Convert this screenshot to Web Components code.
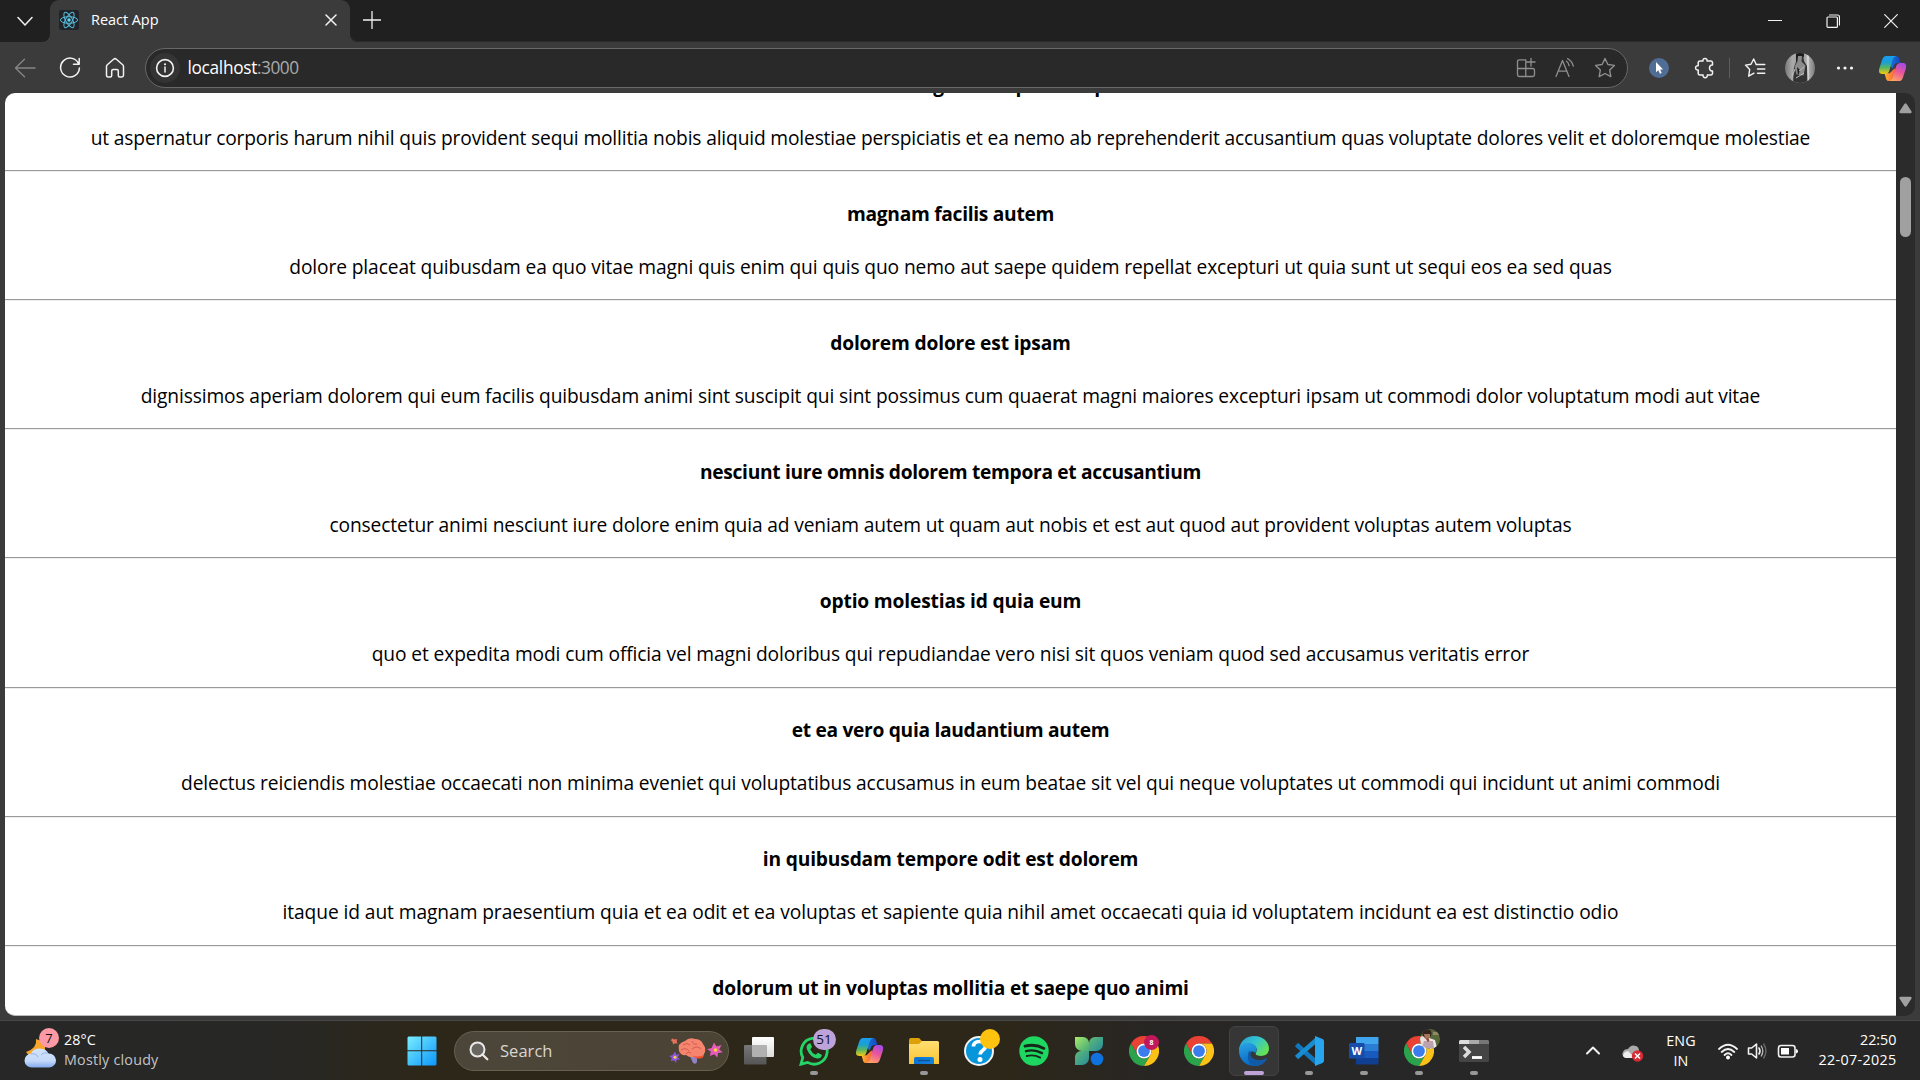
<!DOCTYPE html>
<html lang="en">
<head>
<meta charset="utf-8">
<title>React App</title>
<style>
html,body{margin:0;height:100%;overflow:hidden;background:#3b3b3b;font-family:"Open Sans","Noto Sans",sans-serif}
</style>
</head>
<body>
<desktop-screen></desktop-screen>
<script>
const chromeBall = `<g id="c"><path fill="#e94235" d="M24 12H44.8A24 24 0 0 0 3.2 12L13.6 30A12 12 0 0 1 24 12z"/><path fill="#2ba24c" d="M34.4 30 24 48A24 24 0 0 1 3.2 12L13.6 30A12 12 0 0 0 34.4 30z"/><path fill="#fbc116" d="M24 12H44.8A24 24 0 0 1 24 48L34.4 30A12 12 0 0 0 24 12z"/><circle cx="24" cy="24" r="12" fill="#fff"/><circle cx="24" cy="24" r="9.4" fill="#3b7ded"/></g>`;
const copilot = `<defs><linearGradient id="a" x1="0" y1="0" x2="0" y2="1"><stop offset="0" stop-color="#1a9df0"/><stop offset=".35" stop-color="#199fd6"/><stop offset=".65" stop-color="#58b660"/><stop offset="1" stop-color="#f7cb12"/></linearGradient><linearGradient id="b" x1=".7" y1="0" x2=".3" y2="1"><stop offset="0" stop-color="#a44be8"/><stop offset=".45" stop-color="#e9559b"/><stop offset="1" stop-color="#ffa464"/></linearGradient><linearGradient id="d" x1="0" x2="1"><stop offset="0" stop-color="#1684db"/><stop offset="1" stop-color="#1745c4"/></linearGradient><linearGradient id="e" x1="0" x2="1"><stop offset="0" stop-color="#ffb030"/><stop offset="1" stop-color="#f1453b"/></linearGradient></defs>
<path fill="url(#d)" d="M9 2h9.500q2.500 0 3.200 2.300l1.500 5h-3q-3 0-4 3l-1 3-4-5z"/><path fill="url(#e)" d="M7 20h5l5-5 5 4-2 6q-1 3-4 3h-4.500q-2.300 0-3-2l-1.500-5z"/>
<path fill="url(#a)" d="M8.500 2h10.500q-3 1-3.700 3.500l-3.500 11.500q-1 3.700-4.500 3.700H4.500C1 20.700.5 18 1.500 14.500L4.300 6q1.200-4 4.200-4z"/><path fill="url(#b)" d="M21.500 28H11.500q3-1 3.700-3.500l3.500-11.500q1-3.700 4.500-3.700h2.500c3.500 0 4 2.700 3 6.200L25.900 24q-1.200 4-4.400 4z"/>`;
const I = {
 down:[16,'0 0 16 16',`<path class="s" d="M1 4.500 8 12l7-7.500" stroke-width="1.500"/>`],
 react:[20,'0 0 20 20',`<rect width="20" height="20" rx="2" fill="#20242a"/><g fill="none" stroke="#58bcd8" stroke-width="1"><ellipse cx="10" cy="10" rx="8.600" ry="3.300"/><ellipse cx="10" cy="10" rx="8.600" ry="3.300" transform="rotate(60 10 10)"/><ellipse cx="10" cy="10" rx="8.600" ry="3.300" transform="rotate(120 10 10)"/></g><circle cx="10" cy="10" r="1.700" fill="#61dafb"/>`],
 x:[12,'0 0 12 12',`<path class="s" d="M1 1l10 10M11 1 1 11" stroke-width="1.500"/>`],
 plus:[18,'0 0 18 18',`<path class="s" d="M9 .5v17M.5 9h17" stroke-width="1.300"/>`],
 min:[14,'0 0 14 14',`<path class="s" d="M.5 6.500h13" stroke-width="1.200"/>`],
 max:[14,'0 0 14 14',`<rect class="s" x="1" y="3" width="10.400" height="10.400" rx="1" stroke-width="1.200"/><path class="s" d="M3.500 1h8a2 2 0 0 1 2 2v8" stroke-width="1.200"/>`],
 close:[14,'0 0 14 14',`<path class="s" d="M.7.700l12.600 12.600M13.300.700.7 13.300" stroke-width="1.200"/>`],
 back:[22,'0 0 22 22',`<path class="s" stroke="#858585" d="M21 11H1.500M10.500 2.300 1.500 11l9 8.700" stroke-width="1.400"/>`],
 reload:[22,'0 0 22 22',`<path class="s" d="M19.800 7.200A9.400 9.400 0 1 0 20.400 11M20.200 1.500v5.700h-5.700" stroke-width="1.500"/>`],
 home:[22,'0 0 22 22',`<path class="s" d="M2.500 9.500q0-1 .8-1.700l6.300-5.600q1.400-1.200 2.800 0l6.300 5.600q.8.700.8 1.700v8.800q0 1.700-1.700 1.700h-2q-1.500 0-1.500-1.500V14q0-1.500-1.500-1.500h-3.600Q7.700 12.500 7.700 14v4.500q0 1.500-1.500 1.500h-2q-1.700 0-1.700-1.700z" stroke-width="1.500"/>`],
 info:[30,'0 0 30 30',`<circle cx="15" cy="15" r="15" fill="#343434"/><circle class="s" cx="15" cy="15" r="8.400" stroke-width="1.600"/><path class="s" d="M15 14v5" stroke-width="1.500"/><circle cx="15" cy="11.300" r="1" fill="#fff"/>`],
 split:[20,'0 0 20 20',`<path class="s g" d="M9.500 1.800H3.300Q1.500 1.800 1.500 3.600v13.200q0 1.700 1.800 1.700h13.400q1.800 0 1.800-1.700v-4.500q0-1.800-1.800-1.800H1.500M9.800 1.800v16.700M15 0v8M11 4h8" stroke-width="1.300"/>`],
 aloud:[20,'0 0 20 20',`<path class="s g" d="M1 18.500 7.500 2.500l6.500 16M3.300 13.200h8.400M11.500 3.300q2 1.300 2.600 4.400M12.500.7q4.500 2.300 5.800 7.400" stroke-width="1.300"/>`],
 star:[22,'0 0 22 22',`<path class="s g" d="M11 1.500l2.900 6 6.500.9-4.700 4.600 1.100 6.600L11 16.500l-5.800 3.100 1.100-6.600L1.600 8.400l6.500-.9z" stroke-width="1.400"/>`],
 ext:[20,'0 0 20 20',`<circle cx="10" cy="10" r="10" fill="#506d96"/><path fill="#fff" d="M7 4v10.200l2.300-2 1.700 3.600 1.700-.8-1.600-3.500h3z"/>`],
 puzzle:[22,'0 0 22 22',`<path class="s" d="M6 4h3C8.300.5 13.700.5 13 4h3.700q1.800 0 1.800 1.800V8c-4-.9-4 6.900 0 6v2.300q0 1.700-1.800 1.700h-3.400c.7 3.500-4.900 3.500-4.200 0H6q-1.800 0-1.800-1.700V13C.7 13.700.7 8 4.200 8.700V5.800Q4.200 4 6 4z" stroke-width="1.500"/>`],
 favs:[22,'0 0 22 22',`<path class="s" d="M12 7 9.700 2 7 7.200l-5.500.9 4.200 4.300-1 6.800 5.300-3M12 7.500h8.800M13.500 12h7.300M13.500 16.300h7.300" stroke-width="1.400"/>`],
 avatar:[30,'0 0 30 30',`<defs><clipPath id="p"><circle cx="15" cy="15" r="15"/></clipPath><linearGradient id="w"><stop offset="0" stop-color="#777"/><stop offset=".25" stop-color="#aaa"/><stop offset=".6" stop-color="#999"/><stop offset=".75" stop-color="#bbb"/><stop offset="1" stop-color="#777"/></linearGradient></defs><g clip-path="url(#p)"><path fill="url(#w)" d="M0 0h30v30H0z"/><path d="M11 1h7l1 7 3 5 1 17H8l1-16 2-5z" fill="#333"/><path d="M12.500 3.500q2.500-2 4.500 0l-.5 5 4 4-2 10-7-1-2-8 3-5z" fill="#8c8c8c"/><path d="M11 0h8v4l-2-1h-4l-1 5h-1zM12 14l3 3-2 6z" fill="#1c1c1c"/><path d="M14 18l5-4M11 25l8-5M10 16l-3 8" stroke="#bbb"/><path d="M22.500 2h1v27h-1z" fill="#eee"/></g>`],
 dots:[18,'0 0 18 18',`<g fill="#f4f4f4"><circle cx="2.500" cy="9" r="1.600"/><circle cx="9" cy="9" r="1.600"/><circle cx="15.500" cy="9" r="1.600"/></g>`],
 copilot:[30,'0 0 30 30',copilot],
 start:[30,'0 0 30 30',`<defs><linearGradient id="a" gradientUnits="userSpaceOnUse" x1="0" y1="0" x2="30" y2="30"><stop offset="0" stop-color="#7cefff"/><stop offset="1" stop-color="#0994fb"/></linearGradient></defs><path fill="url(#a)" d="M1.500.5H14.200V14.200H.5V1.500zM15.200.5H28.500L29.500 1.500V14.200H15.200zM.5 15.300H14.200V29.500H1.500L.5 28.500zM15.200 15.300H29.500V28.500L28.500 29.500H15.200z"/>`],
 mag:[20,'0 0 20 20',`<circle cx="8.500" cy="8.500" r="7" fill="#69665f" stroke="#e8e8e6" stroke-width="2"/><path d="M13.500 13.500l4.800 4.800" stroke="#e8e8e6" stroke-width="2.300" stroke-linecap="round"/>`],
 brain:[54,'0 0 54 28',`<path d="M20 17l4 9q3 2 4-1v-8z" fill="#8f83c1"/><path d="M10 14q-2-8 6-10 4-4 10-2 6 0 8 5 4 5 1 10-1 5-8 3-7 1-10-2-5 1-7-4z" fill="#f5856f"/><path d="M22 18q5 3 13 0-1 5-8 3z" fill="#f2502f"/><path d="M14 8q4-3 7 0M23 4q1 4 5 3M12 13q5-3 8 1M23 12q5-4 9 0M17 17q2-3 5-1" stroke="#c95145" fill="none" stroke-width=".8"/><path fill="#8f56dc" d="M6 14.500l1.200 3.200 3.400-.7-1.800 3 2.200 2.500-3.300.2L7 26l-2-2.800-3.200 1 1-3.200-2.600-2 3.200-.8z"/><circle cx="6" cy="20.200" r="1.500" fill="#f6d24a"/><path fill="#e75bbd" d="M45 5.500l2.500 4 5-1.500-2.300 4.500 3.600 2.800-4.800.8-.5 4.400-3.300-3.300-4.400 1.800 1-4.500-3.800-2.200 4.600-1.200z"/><circle cx="46.500" cy="13" r="1.800" fill="#fbd13d"/><path fill="#e9735a" d="M3 1.500l2.500 1 2.500-.5-.3 2.500.8 2-2.500-.3L4 7.500 3.700 5 2 3.500z"/>`],
 views:[30,'0 0 30 30',`<defs><linearGradient id="a" x2="0" y2="1"><stop offset="0" stop-color="#fff"/><stop offset="1" stop-color="#ddd"/></linearGradient><linearGradient id="b" x2="0" y2="1"><stop offset="0" stop-color="#777"/><stop offset="1" stop-color="#555"/></linearGradient></defs><rect x="8" y="1" width="22" height="20" rx="1" fill="url(#a)"/><rect x="0" y="9" width="22.500" height="19.500" rx="1" fill="url(#b)"/><path d="M8 9h14.500v12H9q-1 0-1-1z" fill="#b1b1b1"/>`],
 whats:[30,'0 0 30 30',`<path d="M2 28.200l1.800-6.700A13 13 0 1 1 8.600 26.400z" fill="none" stroke="#25d366" stroke-width="2.800"/><path d="M10 7.500q-3.500 2-2 6 3 7.500 10 9 4 .5 5-3.500l-4-2.300-2.300 2q-4-1.700-5.500-5.500L13 11l-1.600-3.700z" fill="#25d366"/>`],
 explorer:[30,'0 0 30 30',`<defs><linearGradient id="a" x2="0" y2="1"><stop offset="0" stop-color="#ffdf72"/><stop offset="1" stop-color="#fcc431"/></linearGradient><linearGradient id="b" x2="1"><stop offset="0" stop-color="#0c73d0"/><stop offset="1" stop-color="#1482db"/></linearGradient></defs><path d="M0 14V4q0-2 2-2h8l3 3h10l6 3v6z" fill="#dda008"/><path d="M0 8h10l3-3h15.500q1.500 0 1.500 1.500V28H0z" fill="url(#a)"/><path d="M5 28v-5q0-2 2-2h16q2 0 2 2v5z" fill="url(#b)"/><path d="M9 24.500h12" stroke="#075397" stroke-width="1.300"/>`],
 help:[30,'0 0 30 30',`<circle cx="15" cy="15" r="14" fill="#0795dc" stroke="#f3f3f3" stroke-width="2"/><path d="M9.500 10.500q.2-5 6-5t6 4.500q0 2.400-2.800 4.400-2.500 1.700-2.500 4.100" fill="none" stroke="#fff" stroke-width="3.600"/><circle cx="16" cy="23.500" r="2.500" fill="#fff"/>`],
 spotify:[30,'0 0 30 30',`<circle cx="15" cy="15" r="14.700" fill="#1ed760"/><g fill="none" stroke="#15281a" stroke-linecap="round"><path d="M6 10.200q10-2.700 19 2.200" stroke-width="2.800"/><path d="M7 15.200q8.500-2.300 16 1.900" stroke-width="2.400"/><path d="M7.700 20q7.500-1.800 13.500 1.600" stroke-width="1.900"/></g>`],
 clover:[30,'0 0 30 30',`<defs><linearGradient id="a" x2="1" y2="1"><stop offset="0" stop-color="#a8ea6c"/><stop offset="1" stop-color="#43a878"/></linearGradient><linearGradient id="b" x2="1" y2="1"><stop offset="0" stop-color="#61bb74"/><stop offset="1" stop-color="#268b9d"/></linearGradient><linearGradient id="e" x2="1" y2="1"><stop offset="0" stop-color="#176ee2"/><stop offset="1" stop-color="#0876dc"/></linearGradient></defs><path d="M29 1v7a7 7 0 0 1-7 7h-7V7a6 6 0 0 1 6-6z" fill="url(#b)"/><path d="M1 29v-8a6 6 0 0 1 6-6h8v7a7 7 0 0 1-7 7z" fill="url(#b)"/><path d="M1 1h8a6 6 0 0 1 6 6v8H8a7 7 0 0 1-7-7z" fill="url(#a)"/><circle cx="23" cy="23" r="6.300" fill="url(#e)"/>`],
 chrome:[30,'0 0 48 48',chromeBall],
 edge:[30,'0 0 30 30',`<defs><linearGradient id="a" x2="1" y2=".6"><stop offset="0" stop-color="#279bd9"/><stop offset=".55" stop-color="#34c6cd"/><stop offset="1" stop-color="#65e255"/></linearGradient><linearGradient id="b" x2=".3" y2="1"><stop offset="0" stop-color="#2aa5e5"/><stop offset="1" stop-color="#0868c4"/></linearGradient></defs><path d="M0 14C1 5 7 0 15 0c9 0 15 6 15 12.500 0 6-5 8-10 7.300-3-.5-4-1.500-3-3 2-4 0-6-3-8z" fill="url(#a)"/><path d="M0 15C0 7 9 5 14 8c5 2.500 4 7 2 9-3-3-6-1-6 3 0 6 8 7 18 3-4 6-9 7.200-13 7C5 29.500 0 22 0 15z" fill="url(#b)"/><path d="M10.500 14.500C7 20 9 28 15 30c5 .2 10-2 12.800-7q.4-1-.8-.6c-9 4.200-17.500-.4-15-6z" fill="#105aa6"/>`],
 code:[30,'0 0 30 30',`<path d="M2.500 8.500 23 27" stroke="#1178bd" stroke-width="4.800"/><path d="M2.500 21.500 23 3.500" stroke="#198dd2" stroke-width="4.800"/><path d="M21 0l7.500 3q1.500.6 1.500 2.200v19.600q0 1.600-1.500 2.200l-7.500 3z" fill="#27a5ef"/>`],
 word:[30,'0 0 30 30',`<path d="M7 1h22.500v7H7z" fill="#41a5ee"/><path d="M7 8h22.500v7H7z" fill="#2b7cd3"/><path d="M7 15h22.500v7H7z" fill="#185abd"/><path d="M7 22h22.500v6.500H7z" fill="#103f91"/><rect x="0" y="7" width="15.500" height="15.500" rx="1.300" fill="#174daa"/><text x="7.700" y="18.500" text-anchor="middle" fill="#fff" font-family="Open Sans" font-weight="700" font-size="11">W</text>`],
 term:[30,'0 0 30 30',`<rect y="4" width="30" height="22" rx="1.500" fill="#454545"/><path d="M0 8V5.500Q0 4 1.500 4H10v4z" fill="#ddd"/><path d="M10 4h10v4H10z" fill="#aaa"/><path d="M20 4h8.500Q30 4 30 5.500V8H20z" fill="#777"/><path d="M5 11l5 5-5 5" fill="none" stroke="#ddd" stroke-width="3.500"/><path d="M13 21.500h10" stroke="#fff" stroke-width="2.800"/>`],
 person:[20,'0 0 20 20',`<defs><clipPath id="p"><circle cx="10" cy="10" r="10"/></clipPath></defs><g clip-path="url(#p)"><path fill="#59683a" d="M0 0h20v20H0z"/><path fill="#8f8a62" d="M13 3h7v3h-7z"/><path d="M0 8l3-1 4 4 6 8-9 1-4-6z" fill="#e9dfdd"/><circle cx="7" cy="4.500" r="4.500" fill="#34231f"/><path d="M4 5h6v5H5z" fill="#a8735d"/><path d="M9 9l6 2 2 8-7 1z" fill="#ede6e4"/><path d="M4 12l9 0 1 7H2z" fill="#b9a3ae"/><path d="M7 9.500l1.500 3" stroke="#a34439" stroke-width="2"/></g>`],
 weather:[34,'0 0 34 38',`<defs><linearGradient id="a" x2="0" y2="1"><stop offset="0" stop-color="#d4e3fb"/><stop offset=".65" stop-color="#c4d9fa"/><stop offset="1" stop-color="#84a9ed"/></linearGradient></defs><path d="M12 8q1.500 9-10 13 4 6 12 3l7-4V10q-5 0-9-2z" fill="#f8a52a"/><path d="M8 36.500a7 7 0 0 1-1-14q2-5 9-5 6 .2 8.500 5A7 7 0 0 1 25.500 36.500z" fill="url(#a)"/><path d="M7 23q5-1 7 3M24 22q-5-1-7 2" fill="none" stroke="#90b3ed"/>`],
 up:[16,'0 0 16 16',`<path class="s" d="M2 10.500l6-6 6 6" stroke-width="2"/>`],
 cloud:[22,'0 0 22 22',`<path d="M4 17q-5-2-3-6 1-3 5-3 3-5 8-3 3 1 3 5 3 2 2 7z" fill="#aaa"/><path d="M1 15q0-4 5-5l7 7H4q-2 0-3-2z" fill="#eee"/><circle cx="15.500" cy="15" r="5.700" fill="#d92b35"/><path d="M13 12.500l5 5m0-5l-5 5" stroke="#fff" stroke-width="1.500"/>`],
 wifi:[22,'0 0 22 22',`<path class="s" d="M2 9q9-8.500 18 0M4.700 12q6.300-6 12.600 0M7.600 15q3.400-3.400 6.800 0" stroke-width="1.800"/><circle cx="11" cy="17.500" r="2" fill="#fff"/>`],
 sound:[22,'0 0 22 22',`<path class="s" d="M1.500 8h3.200L9.500 4v14l-4.800-4H1.500zM12 8q2 3 0 6" stroke-width="1.600"/><path class="s" stroke="#bbb" d="M14.300 6q3 5 0 10" stroke-width="1.300"/><path class="s" stroke="#666" d="M16.700 4q4.500 7 0 14" stroke-width="1.400"/>`],
 battery:[22,'0 0 22 22',`<rect class="s" x="1.500" y="5.500" width="16.500" height="11.500" rx="2.500" stroke-width="1.600"/><rect x="4" y="8" width="8" height="6.500" fill="#fff"/><path d="M19 9q2 .3 2 2.200t-2 2.200z" fill="#fff"/>`],
 tri:[13,'0 0 13 11',`<path d="M5.200 1.200q1.300-1.800 2.600 0l4.600 7q.8 2-1 2H1.600q-1.800 0-1-2z" fill="#a0a0a0"/>`]
};
function make(name, html, cb){
  const t=document.createElement('template'); t.innerHTML=html;
  customElements.define(name, class extends HTMLElement{
    constructor(){super();this.attachShadow({mode:'open'}).append(t.content.cloneNode(true));}
    connectedCallback(){ if(cb) cb(this,this.shadowRoot); }
  });
}
make('ui-icon',`<style>:host{display:block;flex:none;line-height:0}.s{fill:none;stroke:#f2f2f2;stroke-linecap:round;stroke-linejoin:round}.s[stroke="#858585"]{stroke:#858585}.s[stroke="#bbb"]{stroke:#bbb}.s[stroke="#666"]{stroke:#666}.s.g{stroke:#8f8f8f}</style><div></div>`,(e,r)=>{
  const [w,vb,body]=I[e.getAttribute('name')], v=vb.split(' '), s=+(e.getAttribute('size')||w);
  r.querySelector('div').innerHTML=`<svg width="${s}" height="${s*v[3]/v[2]}" viewBox="${vb}">${body}</svg>`;
});
make('fit-text',`<style>:host{display:block;white-space:nowrap}span{display:inline-block}</style><span><slot></slot></span>`,(e,r)=>{
  const s=r.querySelector('span'), w=+e.getAttribute('w');
  if(!e.textContent) return;
  s.style.letterSpacing='0px';
  s.style.letterSpacing=((w-s.getBoundingClientRect().width)/e.textContent.length)+'px';
});
make('tab-strip',`<style>:host{display:flex;height:42px;background:#202020;align-items:stretch;color:#fff}
.menu{width:50px;display:grid;place-items:center;border-bottom-right-radius:8px;background:#202020}.w{background:#3b3b3b;display:flex}
.tab{width:300px;box-sizing:border-box;background:#3b3b3b;border-radius:9px 9px 0 0;display:flex;align-items:center;padding:0 13.500px 2px 9px;font-size:14.500px}
.tab fit-text{margin:-1px 0 0 12px;flex:1}.rest{flex:1;background:#202020;border-bottom-left-radius:8px;display:flex;align-items:center;padding-left:13px;box-shadow:inset 0 -1px #2a2a2a}
.rest>.gap{flex:1}.b{width:58px;display:grid;place-items:center}.top{background:#202020;display:flex}</style>
<div class="w"><div class="menu"><ui-icon name="down"></ui-icon></div></div><div class="top"><div class="tab"><ui-icon name="react"></ui-icon><fit-text w="67.500">React App</fit-text><ui-icon name="x"></ui-icon></div></div>
<div class="w" style="flex:1"><div class="rest"><ui-icon name="plus" style="margin-bottom:3px"></ui-icon><div class="gap"></div><div class="b"><ui-icon name="min"></ui-icon></div><div class="b"><ui-icon name="max"></ui-icon></div><div class="b"><ui-icon name="close"></ui-icon></div></div></div>`);
make('address-bar',`<style>:host{display:flex;box-sizing:border-box;width:1483px;height:40px;border:1px solid #686868;border-radius:20px;background:#292929;align-items:center;padding:0 2.500px 0 4px;margin-left:7.5px}
.url{display:flex;flex:1;margin:-1px 0 0 7.500px;font-size:17.300px;color:#fff}.url .p{color:#a9a9a9}.i{width:39.500px;display:grid;place-items:center}</style>
<ui-icon name="info"></ui-icon><div class="url"><fit-text w="69.500">localhost</fit-text><fit-text class="p" w="41.500">:3000</fit-text></div><div class="i"><ui-icon name="split"></ui-icon></div><div class="i"><ui-icon name="aloud"></ui-icon></div><div class="i"><ui-icon name="star"></ui-icon></div>`);
make('tool-bar',`<style>:host{display:flex;box-sizing:border-box;height:51px;background:#3b3b3b;align-items:center;padding:1px 0 0 2.500px}.i{width:45px;display:grid;place-items:center}.l{width:1px;height:20px;background:#5d5d5d;margin:0 2.500px 0 1.500px}</style>
<div class="i"><ui-icon name="back"></ui-icon></div><div class="i"><ui-icon name="reload"></ui-icon></div><div class="i"><ui-icon name="home"></ui-icon></div><address-bar></address-bar>
<div class="i" style="width:46px;margin-left:8px"><ui-icon name="ext"></ui-icon></div><div class="i"><ui-icon name="puzzle"></ui-icon></div><div class="l"></div><div class="i"><ui-icon name="favs"></ui-icon></div><div class="i"><ui-icon name="avatar"></ui-icon></div><div class="i"><ui-icon name="dots"></ui-icon></div><div class="i" style="width:51px"><ui-icon name="copilot" size="29"></ui-icon></div>`);
make('post-item',`<style>:host{display:block;box-sizing:border-box;height:129.140px;flex:none;border-bottom:1px solid #9a9a9a;box-shadow:0 1px #eee;text-align:center;color:#000;padding-top:28.700px}
div{height:28px;line-height:28px;display:flex;justify-content:center}.t{font-size:19.200px;font-weight:700}.b{font-size:19.200px;margin-top:25px}</style><div class="t"></div><div class="b"></div>`,(e,r)=>{
  for(const [c,k] of [['.t','title'],['.b','body']]){if(!e.dataset[k])continue;const f=document.createElement('fit-text');f.setAttribute('w',e.dataset[k+'W']);f.textContent=e.dataset[k];r.querySelector(c).append(f);}
});
const posts=[
['dolorem eum magni eos aperiam quia',358,'ut aspernatur corporis harum nihil quis provident sequi mollitia nobis aliquid molestiae perspiciatis et ea nemo ab reprehenderit accusantium quas voluptate dolores velit et doloremque molestiae',1719.5],
['magnam facilis autem',207,'dolore placeat quibusdam ea quo vitae magni quis enim qui quis quo nemo aut saepe quidem repellat excepturi ut quia sunt ut sequi eos ea sed quas',1322.5],
['dolorem dolore est ipsam',240.5,'dignissimos aperiam dolorem qui eum facilis quibusdam animi sint suscipit qui sint possimus cum quaerat magni maiores excepturi ipsam ut commodi dolor voluptatum modi aut vitae',1619.5],
['nesciunt iure omnis dolorem tempora et accusantium',501,'consectetur animi nesciunt iure dolore enim quia ad veniam autem ut quam aut nobis et est aut quod aut provident voluptas autem voluptas',1242],
['optio molestias id quia eum',261.5,'quo et expedita modi cum officia vel magni doloribus qui repudiandae vero nisi sit quos veniam quod sed accusamus veritatis error',1157.5],
['et ea vero quia laudantium autem',317.500,'delectus reiciendis molestiae occaecati non minima eveniet qui voluptatibus accusamus in eum beatae sit vel qui neque voluptates ut commodi qui incidunt ut animi commodi',1539],
['in quibusdam tempore odit est dolorem',375.5,'itaque id aut magnam praesentium quia et ea odit et ea voluptas et sapiente quia nihil amet occaecati quia id voluptatem incidunt ea est distinctio odio',1336],
['dolorum ut in voluptas mollitia et saepe quo animi',476.5,'',0]];
make('web-page',`<style>:host{display:flex;box-sizing:border-box;height:927px;padding:0 5px 4px;background:#3b3b3b}
.list{width:1891px;height:923px;box-sizing:border-box;background:#fff;border-radius:10px 0 0 10px;overflow:hidden;display:flex;flex-direction:column;border-bottom:1px solid #bbb}.list post-item:first-child{margin-top:-51.100px}
.sb{width:19px;height:923px;background:#2b2b2b;border-radius:0 10px 10px 0;display:flex;flex-direction:column;align-items:center;box-sizing:border-box;padding:10px 0 9px}
.th{width:11px;height:60px;border-radius:6px;background:#a0a0a0;margin-top:63px}.sp{flex:1}</style><div class="list"></div><div class="sb"><ui-icon name="tri"></ui-icon><div class="th"></div><div class="sp"></div><ui-icon name="tri" style="transform:scaleY(-1)"></ui-icon></div>`,(e,r)=>{
  const l=r.querySelector('.list');
  for(const [t,tw,b,bw] of posts){const p=document.createElement('post-item');p.dataset.title=t;p.dataset.titleW=tw;p.dataset.body=b;p.dataset.bodyW=bw;l.append(p);}
});
make('task-app',`<style>:host{display:grid;place-items:center;width:55px;height:60px;position:relative;flex:none}
.bx{width:50px;height:50px;display:grid;place-items:center;border-radius:6px;box-sizing:border-box}:host([active]) .bx{background:#363636;border:1px solid #424242}
.r{position:absolute;bottom:6px;left:23.500px;width:8px;height:4px;border-radius:2px;background:#989898;display:none}:host([run]) .r{display:block}:host([active]) .r{display:block;width:20px;left:17.500px;background:#bfa3d7}
::slotted(*){position:absolute;border-radius:50%;display:grid;place-items:center}</style><div class="bx"></div><div class="r"></div><slot></slot>`,(e,r)=>{
  const n=document.createElement('ui-icon');n.setAttribute('name',e.getAttribute('icon'));if(e.getAttribute('size'))n.setAttribute('size',e.getAttribute('size'));r.querySelector('.bx').append(n);
});
make('task-bar',`<style>:host{display:flex;box-sizing:border-box;height:60px;border-top:1px solid #474747;background:linear-gradient(90deg,#272727 0,#272726 260px,#2d2719 430px,#2d2719 1000px,#282624 1150px,#272727 1300px);align-items:center;color:#fff;font-size:14.300px}
.wx{width:394.500px;height:59px;box-sizing:border-box;padding:0 0 1px 24px;display:flex;align-items:center;position:relative}.wx ui-icon{margin-right:6px}.wx .t{line-height:20px}.t .m{color:#c4c4c4}
.badge{position:absolute;left:39px;top:7px;width:20px;height:20px;border-radius:50%;background:#fd99a4;color:#111;font-size:13px;line-height:20px;text-align:center}
.search{width:275px;height:40px;box-sizing:border-box;border:1px solid #66614f;border-radius:20px;background:linear-gradient(90deg,#4c463a,#4b4334);margin:0 2.500px 0 4.500px;display:flex;align-items:center;padding:0 5px 0 14px;font-size:16.500px;color:#d9d6d0}.search fit-text{flex:1;margin:0 0 0 11px}
.tray{flex:1;display:flex;align-items:center;height:59px;padding:0 23.500px 0 0;justify-content:flex-end}.c{text-align:center;line-height:20px;width:28px;display:flex;flex-direction:column;align-items:center}.d{line-height:20px;width:78px;display:flex;flex-direction:column;align-items:flex-end;margin-left:20px;padding-bottom:1px}</style>
<div class="wx"><ui-icon name="weather"></ui-icon><span class="badge">7</span><div class="t"><fit-text w="32">28°C</fit-text><fit-text class="m" w="94.500">Mostly cloudy</fit-text></div></div>
<task-app icon="start"></task-app><div class="search"><ui-icon name="mag"></ui-icon><fit-text w="52.500">Search</fit-text><ui-icon name="brain"></ui-icon></div>
<task-app icon="views"></task-app><task-app icon="whats" run><span style="left:26px;top:8px;width:23px;height:21px;border-radius:11px;background:#bda3da;color:#111;font-size:13.500px">51</span></task-app><task-app icon="copilot" size="29"></task-app><task-app icon="explorer" run></task-app><task-app icon="help"><span style="left:28.500px;top:8px;width:20px;height:20px;background:#ffc20e"></span></task-app><task-app icon="spotify"></task-app><task-app icon="clover"></task-app><task-app icon="chrome"><span style="left:27.500px;top:14px;width:15px;height:15px;background:#c2185b;font:700 7px 'Open Sans'">8</span></task-app><task-app icon="chrome"></task-app><task-app icon="edge" active></task-app><task-app icon="code" run></task-app><task-app icon="word" run></task-app><task-app icon="chrome" run><ui-icon name="person" style="left:28px;top:8px"></ui-icon></task-app><task-app icon="term" run></task-app>
<div class="tray"><ui-icon name="up"></ui-icon><ui-icon name="cloud" style="margin:2px 0 0 21.500px"></ui-icon><div class="c" style="margin:0 22px 0 23px"><fit-text w="29.500">ENG</fit-text><fit-text w="15">IN</fit-text></div><ui-icon name="wifi"></ui-icon><ui-icon name="sound" style="margin-left:7.500px"></ui-icon><ui-icon name="battery" style="margin-left:8px"></ui-icon><div class="d"><fit-text w="36.500">22:50</fit-text><fit-text w="78">22-07-2025</fit-text></div></div>`);
make('desktop-screen',`<style>:host{display:flex;flex-direction:column;width:1920px;height:1080px;overflow:hidden}</style><tab-strip></tab-strip><tool-bar></tool-bar><web-page></web-page><task-bar></task-bar>`);
</script>
</body>
</html>
